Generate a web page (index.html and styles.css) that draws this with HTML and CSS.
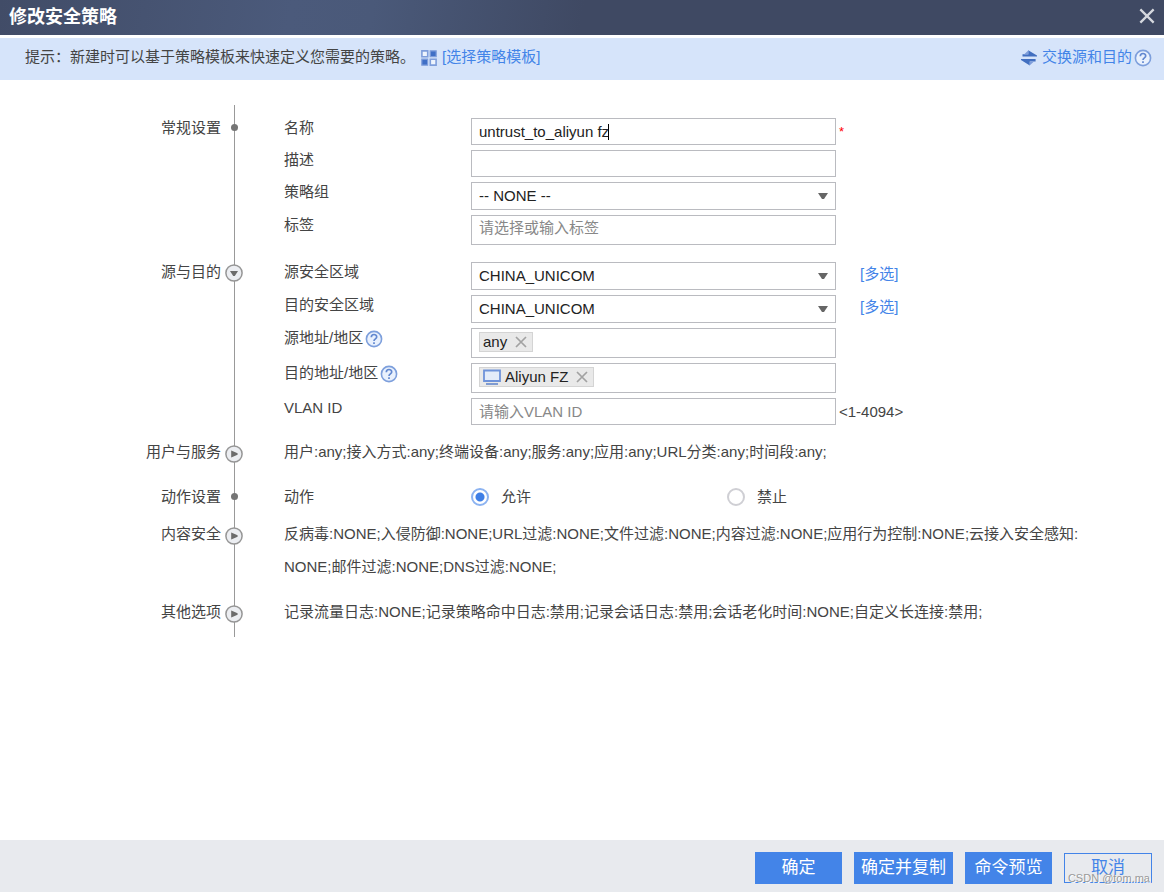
FILE: index.html
```html
<!DOCTYPE html>
<html lang="zh-CN">
<head>
    <meta charset="UTF-8">
    <meta name="viewport" content="width=device-width, initial-scale=1.0">
    <title>修改安全策略</title>
    <link rel="stylesheet" href="styles.css">
</head>
<body>
    <svg class="defs" width="0" height="0" aria-hidden="true">
        <symbol id="help" viewBox="0 0 18 18">
            <circle cx="9" cy="9" r="7.6" fill="#e9f1fd" stroke="#7d9fdc" stroke-width="1.6"/>
            <path d="M6.3 7.2C6.3 3.6 11.7 3.7 11.7 7C11.7 8.9 9 8.8 9 11M9 12.2V14" fill="none" stroke="#6288d0" stroke-width="1.7"/>
        </symbol>
        <symbol id="cross" viewBox="0 0 12 12">
            <path d="M1 1L11 11M11 1L1 11" fill="none" stroke="currentColor" stroke-width="1.7"/>
        </symbol>
        <symbol id="down" viewBox="0 0 10 6">
            <path d="M0 0H10L6 6H4Z" fill="#666"/>
        </symbol>
        <symbol id="opened" viewBox="0 0 18 18">
            <circle cx="9" cy="9" r="8.1" fill="#eceef2" stroke="#969696" stroke-width="1.5"/>
            <path d="M5 7H13L9.8 12H8.2Z" fill="#6c6c6c"/>
        </symbol>
        <symbol id="closed" viewBox="0 0 18 18">
            <circle cx="9" cy="9" r="8.1" fill="#eceef2" stroke="#969696" stroke-width="1.5"/>
            <path d="M6.2 5.4L12.6 8.3V9.7L6.2 12.6Z" fill="#6c6c6c"/>
        </symbol>
    </svg>

    <header class="title">
        <h1>修改安全策略</h1>
        <button type="button" class="close" aria-label="关闭"><svg width="16" height="16"><use href="#cross"/></svg></button>
    </header>

    <div class="tips">
        <p>提示：新建时可以基于策略模板来快速定义您需要的策略。</p>
        <a href="#" class="template">
            <svg width="16" height="16" viewBox="0 0 16 16">
                <g fill="#eef4fd" stroke="#7f9edb" stroke-width="1.6">
                    <path d="M.9 .9H6.7V6.7H.9Z"/>
                    <path d="M9.3 9.3H15.1V15.1H9.3Z"/>
                </g>
                <g fill="#3f6fc6" stroke="#7f9edb" stroke-width="1.2">
                    <path d="M9.2 .8H15.2V6.6H9.2Z"/>
                    <path d="M.8 9.2H6.6V15.2H.8Z"/>
                </g>
            </svg>
            <span>[选择策略模板]</span>
        </a>
        <a href="#" class="swap">
            <svg width="16" height="16" viewBox="0 0 16 16">
                <path d="M1.5 4.2H7.2V.2L16 5.6V6.6H1.5ZM14.6 11.6H8.8V15.6L0 10V9H14.6Z" fill="#426fc0"/>
                <path d="M7.5 .2V4.4H3ZM8.6 15.6V11.4H13Z" fill="#7f9edb"/>
            </svg>
            <span>交换源和目的</span>
        </a>
        <svg class="help" width="18" height="18"><use href="#help"/></svg>
    </div>

    <form id="policy" class="policy">
        <section class="group first">
            <h2>常规设置</h2>
            <div class="line"><i class="dot"></i></div>
            <div class="fields">
                <div class="row">
                    <label for="name">名称</label>
                    <div class="control">
                        <input type="text" id="name" class="text" value="untrust_to_aliyun fz">
                        <i class="caret"></i>
                    </div>
                    <span class="required">*</span>
                </div>
                <div class="row">
                    <label for="desc">描述</label>
                    <div class="control"><input type="text" id="desc" class="text"></div>
                </div>
                <div class="row">
                    <label for="group">策略组</label>
                    <div class="control">
                        <select id="group"><option>-- NONE --</option></select>
                        <svg class="arrow" width="10" height="6"><use href="#down"/></svg>
                    </div>
                </div>
                <div class="row">
                    <label for="tag">标签</label>
                    <div class="control tags"><input type="text" id="tag" placeholder="请选择或输入标签"></div>
                </div>
            </div>
        </section>

        <section class="group source">
            <h2>源与目的</h2>
            <div class="line"><button type="button" aria-label="收起源与目的"><svg width="18" height="18"><use href="#opened"/></svg></button></div>
            <div class="fields">
                <div class="row">
                    <label for="srczone">源安全区域</label>
                    <div class="control">
                        <select id="srczone"><option>CHINA_UNICOM</option></select>
                        <svg class="arrow" width="10" height="6"><use href="#down"/></svg>
                    </div>
                    <a href="#" class="multi">[多选]</a>
                </div>
                <div class="row">
                    <label for="dstzone">目的安全区域</label>
                    <div class="control">
                        <select id="dstzone"><option>CHINA_UNICOM</option></select>
                        <svg class="arrow" width="10" height="6"><use href="#down"/></svg>
                    </div>
                    <a href="#" class="multi">[多选]</a>
                </div>
                <div class="row">
                    <label for="srcaddr">源地址/地区<svg class="help" width="18" height="18"><use href="#help"/></svg></label>
                    <div class="control tags">
                        <span class="tag">any<button type="button" aria-label="删除 any"><svg width="12" height="12"><use href="#cross"/></svg></button></span>
                        <input type="text" id="srcaddr">
                    </div>
                </div>
                <div class="row">
                    <label for="dstaddr">目的地址/地区<svg class="help" width="18" height="18"><use href="#help"/></svg></label>
                    <div class="control tags">
                        <span class="tag">
                            <svg class="host" width="18" height="16" viewBox="0 0 18 16">
                                <path d="M1 1.5H17V12H1Z" fill="#e4ecf9" stroke="#6f93da" stroke-width="1.8"/>
                                <path d="M3 15H15" stroke="#5b80c8" stroke-width="1.5"/>
                            </svg>
                            Aliyun FZ<button type="button" aria-label="删除 Aliyun FZ"><svg width="12" height="12"><use href="#cross"/></svg></button></span>
                        <input type="text" id="dstaddr">
                    </div>
                </div>
                <div class="row">
                    <label for="vlan">VLAN ID</label>
                    <div class="control"><input type="text" id="vlan" class="text" placeholder="请输入VLAN ID"></div>
                    <span class="range">&lt;1-4094&gt;</span>
                </div>
            </div>
        </section>

        <section class="group brief">
            <h2>用户与服务</h2>
            <div class="line"><button type="button" aria-label="展开用户与服务"><svg width="18" height="18"><use href="#closed"/></svg></button></div>
            <p>用户:any;接入方式:any;终端设备:any;服务:any;应用:any;URL分类:any;时间段:any;</p>
        </section>

        <section class="group brief">
            <h2>动作设置</h2>
            <div class="line"><i class="dot"></i></div>
            <div class="row" role="radiogroup" aria-labelledby="action">
                <span id="action">动作</span>
                <div class="radios">
                    <label><input type="radio" name="action" checked>允许</label>
                    <label><input type="radio" name="action">禁止</label>
                </div>
            </div>
        </section>

        <section class="group brief">
            <h2>内容安全</h2>
            <div class="line"><button type="button" aria-label="展开内容安全"><svg width="18" height="18"><use href="#closed"/></svg></button></div>
            <p>反病毒:NONE;入侵防御:NONE;URL过滤:NONE;文件过滤:NONE;内容过滤:NONE;应用行为控制:NONE;云接入安全感知:<wbr>NONE;邮件过滤:NONE;DNS过滤:NONE;</p>
        </section>

        <section class="group brief last">
            <h2>其他选项</h2>
            <div class="line"><button type="button" aria-label="展开其他选项"><svg width="18" height="18"><use href="#closed"/></svg></button></div>
            <p>记录流量日志:NONE;记录策略命中日志:禁用;记录会话日志:禁用;会话老化时间:NONE;自定义长连接:禁用;</p>
        </section>
    </form>

    <footer class="buttons">
        <button type="submit" form="policy">确定</button>
        <button type="button" class="wide">确定并复制</button>
        <button type="button">命令预览</button>
        <button type="button" class="cancel">取消</button>
        <span class="watermark">CSDN @tom.ma</span>
    </footer>
</body>
</html>
```
FILE: styles.css
```css
* {
    margin: 0;
    padding: 0;
    box-sizing: border-box;
}
body {
    display: flex;
    flex-direction: column;
    min-height: 100vh;
    background-color: #fff;
    color: #444;
    font: 15px/18px "Liberation Sans", "Noto Sans CJK SC", sans-serif;
}
a {
    color: #4384e8;
    text-decoration: none;
}
button, input, select {
    font: inherit;
}
button {
    border: none;
    background: none;
    cursor: pointer;
}
svg {
    display: block;
    flex: none;
}
.defs {
    position: absolute;
}

/* 标题栏 */
.title {
    display: flex;
    align-items: center;
    justify-content: space-between;
    height: 35px;
    padding: 0 9px;
    background: linear-gradient(100deg, #414c67 0%, #4b5a7b 25%, #4a5979 32%, #3f4963 50%, #3f4963 100%);
}
.title h1 {
    color: #fff;
    font-size: 18px;
    line-height: 33px;
}
.title .close {
    padding-bottom: 4px;
    color: #d5d8de;
}

/* 提示栏 */
.tips {
    display: flex;
    align-items: center;
    height: 42px;
    margin-top: 3px;
    padding: 0 12px 4px 25px;
    background-color: #d6e4fa;
}
.tips a {
    display: flex;
    align-items: center;
    gap: 5px;
}
.tips a svg {
    margin-top: 2px;
}
.tips .template {
    margin-left: 6px;
}
.tips .swap {
    margin-left: auto;
}
.help {
    margin: 2px 0 0 2px;
}

/* 表单 */
.policy {
    flex: 1;
    padding: 25px 64px 24px 0;
}
.group {
    display: grid;
    grid-template-columns: 221px 26px 1fr;
}
.group h2 {
    font-size: 15px;
    font-weight: normal;
    line-height: 20px;
    text-align: right;
}
.group .line {
    display: flex;
    flex-direction: column;
    align-items: center;
    background: linear-gradient(#999, #999) 13px 0 / 1px 100% no-repeat;
}
.line button {
    margin-top: 2px;
}
.line .dot {
    width: 7px;
    height: 7px;
    margin: 6px 0 0 1px;
    border-radius: 50%;
    background-color: #757575;
}
.first h2, .first .line, .first .fields {
    padding-top: 13px;
}
.fields {
    display: flex;
    flex-direction: column;
    gap: 5px;
    padding: 0 0 17px 37px;
}
.source .fields {
    padding-bottom: 10px;
}
.row {
    display: grid;
    grid-template-columns: 187px minmax(0, 365px) auto;
    justify-content: start;
    align-items: start;
}
.row > label {
    display: flex;
    line-height: 20px;
}
.control {
    position: relative;
    color: #222;
}
.text, .control select, .tags {
    display: block;
    width: 100%;
    height: 27px;
    padding: 0 7px;
    border: 1px solid #babbc0;
    border-radius: 0;
    outline: none;
    background-color: #fff;
    color: #222;
}
.control select {
    height: 28px;
    appearance: none;
}
.control ::placeholder {
    color: #888;
}
.control .arrow {
    position: absolute;
    top: 11px;
    right: 8px;
    pointer-events: none;
}
.caret {
    position: absolute;
    top: 6px;
    left: 137px;
    width: 1px;
    height: 16px;
    background-color: #000;
}
.tags {
    display: flex;
    height: 30px;
    padding: 3px 7px;
}
.tags input {
    flex: 1;
    min-width: 0;
    height: 18px;
    border: none;
    outline: none;
}
.tag {
    display: flex;
    align-items: center;
    gap: 4px;
    height: 20px;
    padding: 0 5px 0 3px;
    border: 1px solid #d4d4d4;
    background-color: #e9e9e9;
}
.tag button {
    margin-left: 4px;
    color: #a2a2a2;
}
.required {
    padding-left: 3px;
    color: #f00;
    font-size: 13px;
    line-height: 27px;
}
.multi {
    padding-left: 24px;
    line-height: 24px;
}
.range {
    padding-left: 3px;
    line-height: 27px;
}

/* 收起的分组 */
.brief, .brief h2 {
    line-height: 33px;
}
.brief p {
    padding: 0 0 12px 37px;
}
.brief .row {
    padding: 0 0 4px 37px;
}
.brief .line button {
    margin-top: 10px;
}
.brief .dot {
    margin-top: 13px;
}
.last p {
    padding-bottom: 9px;
}
.radios {
    display: flex;
}
.radios label {
    display: flex;
    flex: none;
    align-items: center;
    gap: 12px;
    width: 256px;
}
.radios input {
    width: 18px;
    height: 18px;
    border: 2px solid #cfcfd4;
    border-radius: 50%;
    background-color: #fff;
    appearance: none;
}
.radios input:checked {
    border-color: #8cb3f1;
    background: radial-gradient(circle, #3f7fe6 4px, #fff 5px);
}

/* 底部按钮 */
.buttons {
    position: relative;
    display: flex;
    justify-content: flex-end;
    align-items: center;
    gap: 12px;
    height: 52px;
    padding: 4px 12px 0;
    background-color: #e8eaee;
}
.buttons button {
    width: 87px;
    height: 32px;
    background-color: #4384e8;
    color: #fff;
    font-size: 17px;
}
.buttons .wide {
    width: 99px;
}
.buttons .cancel {
    width: 88px;
    height: 30px;
    border: 1px solid #4384e8;
    background: none;
    color: #4384e8;
}
.watermark {
    position: absolute;
    right: 14px;
    bottom: 6px;
    color: #999;
    font-size: 11px;
    line-height: 16px;
    text-shadow: 1px 1px 0 #fff;
    pointer-events: none;
}
```
